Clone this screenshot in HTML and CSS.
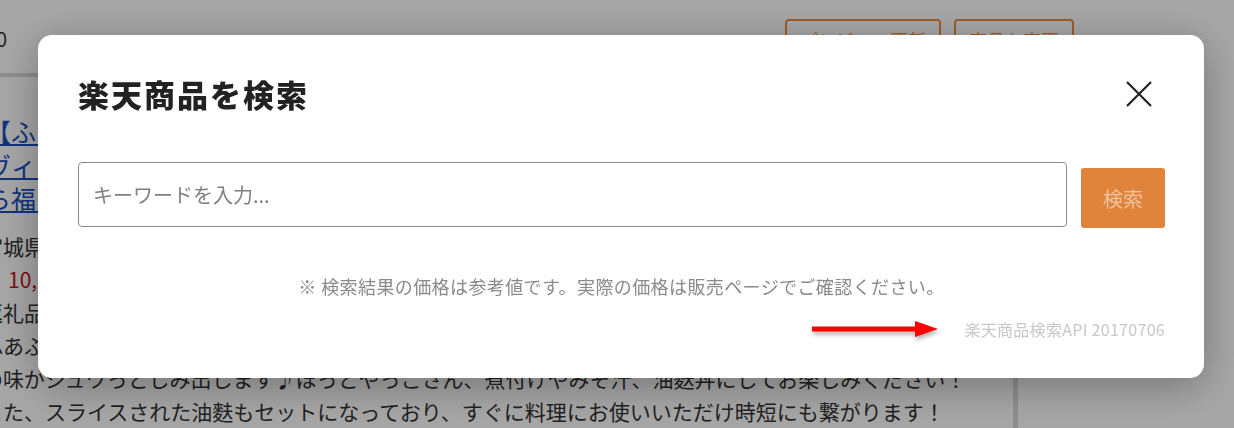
FILE: index.html
```html
<!DOCTYPE html>
<html lang="ja">
<head>
    <meta charset="UTF-8">
    <meta name="viewport" content="width=device-width, initial-scale=1.0">
    <title>楽天商品を検索</title>
    <link rel="stylesheet" href="styles.css">
</head>
<body>

    <div class="page">
        <div class="topbar">
            <div class="price-cut">0</div>
            <div class="top-actions">
                <button class="outline-btn">プレビュー更新</button>
                <button class="outline-btn">商品を変更</button>
            </div>
        </div>

        <div class="layout">
            <div class="main-col">
                <a class="item-title" href="#">【ふるさと納税】ヴィーガン対応<br>ヴィーガンにもうれしい麩のセット<br>ら福を呼ぶ油麩と焼麩の詰め合わせ</a>
                <p class="line">宮城県登米市</p>
                <p class="line"><span class="price">10,000円</span></p>
                <p class="line">返礼品について</p>
                <p class="line">ふあふわの食感と香ばしさが自慢の油麩です。</p>
                <p class="line">の味がジュワっとしみ出します♪ほっとやっこさん、煮付けやみそ汁、油麩丼にしてお楽しみください！</p>
                <p class="line">また、スライスされた油麩もセットになっており、すぐに料理にお使いいただけ時短にも繋がります！</p>
            </div>
            <div class="side-col"></div>
        </div>
    </div>

    <div class="overlay">
        <div class="modal">
            <div class="modal-header">
                <h2>楽天商品を検索</h2>
                <button class="close-btn" aria-label="閉じる">
                    <svg width="26" height="26" viewBox="0 0 26 26">
                        <path d="M1 1 L25 25 M25 1 L1 25" stroke="#222" stroke-width="2.2" fill="none"/>
                    </svg>
                </button>
            </div>

            <div class="search-row">
                <input type="text" class="keyword" placeholder="キーワードを入力...">
                <button class="search-btn">検索</button>
            </div>

            <p class="note">※ 検索結果の価格は参考値です。実際の価格は販売ページでご確認ください。</p>

            <div class="api-row">
                <svg class="arrow" width="130" height="24" viewBox="0 0 130 24">
                    <path d="M2 9.5 H105 V4 L128 12 L105 20 V14.5 H2 Z" fill="#f00"/>
                </svg>
                <span class="api-ver">楽天商品検索API 20170706</span>
            </div>
        </div>
    </div>

</body>
</html>
```

FILE: styles.css
```css
body {
    margin: 0;
    font-family: "Noto Sans CJK JP", "Noto Sans", sans-serif;
    background: #fff;
    color: #333;
    overflow: hidden;
    height: 100vh;
}
.page {
    width: 1234px;
}
.topbar {
    display: flex;
    justify-content: space-between;
    height: 73px;
}
.price-cut {
    font-size: 20px;
    line-height: 26px;
    padding-top: 26px;
    margin-left: -4px;
}
.top-actions {
    display: flex;
    gap: 13px;
    padding-top: 19px;
    margin-right: 160px;
}
.outline-btn {
    height: 42px;
    padding: 0 13px;
    background: #fff;
    border: 2px solid #f0903f;
    border-radius: 4px;
    color: #f0903f;
    font-family: inherit;
    font-size: 18px;
}
.layout {
    display: flex;
}
.main-col {
    width: 1035px;
    border-top: 4px solid #dadada;
    border-right: 5px solid #dadada;
    height: 400px;
    overflow: hidden;
    padding-top: 38px;
    margin-left: -22px;
}
.item-title {
    display: block;
    color: #1a4fc0;
    font-size: 25px;
    line-height: 33.5px;
    white-space: nowrap;
    margin-left: 8px;
}
.line {
    margin: 0 0 0 4px;
    font-size: 21px;
    line-height: 33px;
    white-space: nowrap;
}
.item-title + .line {
    margin-top: 14px;
}
.price {
    color: #c01818;
    margin-left: 26px;
}
.overlay {
    position: fixed;
    inset: 0;
    background: rgba(0, 0, 0, 0.35);
    padding: 35px 0 0 38px;
}
.modal {
    width: 1166px;
    height: 343px;
    box-sizing: border-box;
    background: #fff;
    border-radius: 14px;
    box-shadow: 0 8px 40px rgba(0, 0, 0, 0.3);
    padding: 39px 39px 0 40px;
}
.modal-header {
    display: flex;
    justify-content: space-between;
    align-items: center;
}
.modal-header h2 {
    margin: 0;
    font-size: 31px;
    line-height: 40px;
    font-weight: 900;
    color: #222;
    letter-spacing: 2px;
}
.close-btn {
    background: none;
    border: none;
    padding: 0;
    margin-right: 13px;
    width: 26px;
    height: 26px;
    display: flex;
}
.search-row {
    display: flex;
    align-items: flex-end;
    gap: 14px;
    margin-top: 48px;
}
.keyword {
    flex: 1;
    height: 65px;
    box-sizing: border-box;
    border: 1px solid #8a8a8a;
    border-radius: 4px;
    padding: 0 14px;
    font-family: inherit;
    font-size: 20px;
}
.keyword::placeholder {
    color: #808080;
}
.search-btn {
    width: 84px;
    height: 60px;
    margin-bottom: -1px;
    background: #e0843c;
    border: none;
    border-radius: 3px;
    color: rgba(255, 255, 255, 0.5);
    font-family: inherit;
    font-size: 20px;
}
.note {
    margin: 45px 0 0;
    text-align: center;
    font-size: 18px;
    line-height: 28px;
    color: #8a8a8a;
    letter-spacing: 0.4px;
}
.api-row {
    display: flex;
    justify-content: flex-end;
    align-items: center;
    gap: 24px;
    margin-top: 17px;
}
.arrow {
    filter: drop-shadow(1px 3px 2px rgba(0, 0, 0, 0.3));
}
.api-ver {
    font-size: 16px;
    line-height: 24px;
    color: #c8c8c8;
    letter-spacing: 0.3px;
}
```
